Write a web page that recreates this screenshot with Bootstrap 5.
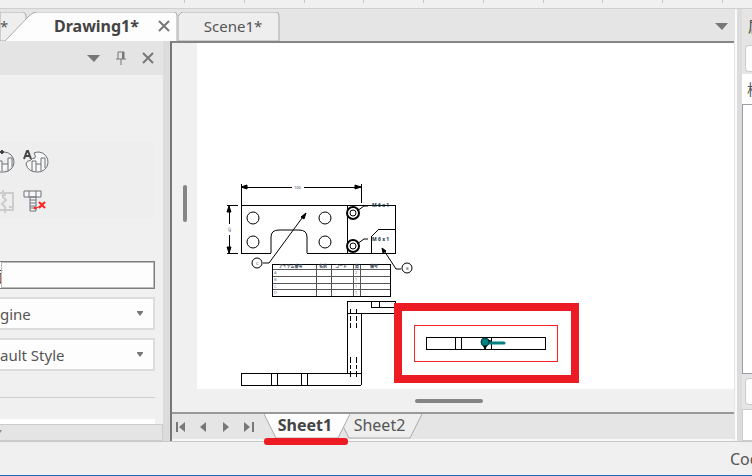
<!DOCTYPE html>
<html lang="en">
<head>
<meta charset="utf-8">
<meta name="viewport" content="width=device-width, initial-scale=1">
<title>Drawing1</title>
<link href="https://cdn.jsdelivr.net/npm/bootstrap@5.3.0/dist/css/bootstrap.min.css" rel="stylesheet">
<style>
body{font-family:"Noto Sans","Noto Sans CJK JP",sans-serif;font-size:15px;line-height:20px;color:#555;background:#f0f0f0}
button{border:0;background:none;padding:0;color:inherit}
svg{display:block;flex:none}
.ribbon-edge{height:9px;border-bottom:1px solid #cfcfcf;padding:0 29px 0 184px}
.ribbon-edge i{width:1px;height:3px;background:#c8c8c8}
.workspace{background:#e5e5e5;border-bottom:1px solid #c8c8c8;min-height:0}
.workspace main,.work-row{min-width:0;min-height:0}
.doc-tabs{height:32px;padding-top:3px}
.doc-tab{height:29px;padding-bottom:2px}
.tab-shape{position:absolute;inset:0;width:100%;height:100%}
.tab-prev{width:27px}
.tab-active{width:173px;margin-left:-22px;padding-left:49px;padding-right:8px;color:#444;font-size:16px}
.tab-scene{width:102px;padding-left:8px}
.menu-btn{margin-right:6px;padding-bottom:2px}
.tool-panel{width:163px;background:#f0f0f0}
.panel-head{height:34px;background:#e4e4e4;padding-right:9px;gap:15px}
.panel-body{padding-right:8px;padding-top:67px}
.tool-grid{background:#eee;height:76px;padding:7px 0 4px 0;margin-bottom:43px}
.tool-grid button{height:26px}
.name-box{height:28px;border:1px solid #7d7d7d;border-left:0;background:#fdfdfd;width:100%;padding:0;text-indent:-12px;color:#444;outline:1px solid #bbb;outline-offset:-2px}
.combo{height:33px;font-size:15px;line-height:20px;padding:0;color:#555;border:2px solid #dcdcdc;border-left:0;border-radius:0;background-color:#fdfdfd;background-image:url("data:image/svg+xml,%3Csvg xmlns='http://www.w3.org/2000/svg' viewBox='0 0 8 6'%3E%3Cpath d='M1 0h6v1L4 5 1 1z' fill='%23777'/%3E%3C/svg%3E");background-size:8px 6px;background-position:right 9px center}
.panel-rule{height:1px;background:#cfcfcf;margin-top:26px}
.white-strip{height:5px;background:#fff;margin-right:8px}
.panel-scroll{height:17px;background:#e4e4e4;border:1px solid #ccc;border-left:0}
.splitter{width:7px;background:#dcdcdc}
.viewer{border-left:2px solid #777;border-top:2px solid #858585;min-width:0}
.v-ruler{width:25px;background:#f0f0f0;padding-top:142px}
.v-grip{width:4px;height:37px;border-radius:2px;background:#858585}
.paper{background:#fff;min-width:0}
.h-ruler{height:25px;background:#f0f0f0;border-bottom:2px solid #999;padding-right:8px}
.h-grip{width:68px;height:4px;border-radius:2px;background:#858585}
.sheet-bar{height:27px;border-bottom:2px solid #f7f7f7;padding-left:2px}
.sheet-nav{width:23px;height:25px}
.sheet-tab{height:25px;padding-bottom:4px;font-size:16px}
.sheet-one{width:86px;margin-left:-2px;padding-right:4px;color:#444}
.sheet-two{width:80px;margin-left:-7px;padding-right:7px}
.mark-line{position:absolute;left:0;bottom:-6px;width:84px;height:7px;border-radius:3px;background:#ed1c24;z-index:3}
.view-edge{width:8px;background:linear-gradient(90deg,#e4e4e4 0 1px,#fafafa 1px 3px,#dcdcdc 3px)}
.dock{width:10px;background:#e5e5e5}
.dock-title{height:36px;padding:7px 0 0 6px;color:#444}
.dock-field{height:27px;background:#fdfdfd;border:1px solid #ccc;border-right:0;border-radius:4px 0 0 4px;margin-left:3px}
.dock-label{height:30px;background:#fff;padding:5px 0 0 5px;margin-top:2px}
.dock-list{border:1px solid #9a9ea4;border-right:0;background:#fff}
.dock-foot{height:32px;background:#fff;border:1px solid #ccc;border-right:0}
.status{height:34px;border-bottom:1px solid #1b68b3;padding-left:730px;font-size:16px}
</style>
<script src="https://cdn.jsdelivr.net/npm/bootstrap@5.3.0/dist/js/bootstrap.bundle.min.js"></script>
</head>
<body class="vh-100 d-flex flex-column overflow-hidden">
<header class="ribbon-edge d-flex justify-content-between"><i></i><i></i><i></i><i></i><i></i><i></i><i></i><i></i><i></i><i></i></header>
<div class="workspace d-flex flex-fill">
  <main class="d-flex flex-column flex-fill">
    <nav class="doc-tabs d-flex" aria-label="Documents">
      <button class="doc-tab tab-prev position-relative text-start"><svg class="tab-shape" viewBox="0 0 27 29" preserveAspectRatio="none"><path d="M0 0H23Q26 1 26 4V29H0z" fill="#eee" stroke="#aaa"/></svg><span class="position-relative">*</span></button>
      <div class="doc-tab tab-active position-relative d-flex align-items-center justify-content-between">
        <svg class="tab-shape" viewBox="0 0 173 29" preserveAspectRatio="none"><path d="M0 29L24 4Q28 0 32 0H169Q172 0 172 4V29z" fill="#fdfdfd"/><path d="M0 29L24 4Q28 0 32 0H169Q172 0 172 4V29" fill="none" stroke="#aaa"/></svg>
        <button class="position-relative fw-bold">Drawing1*</button>
        <button class="position-relative" aria-label="Close Drawing1"><svg width="12" height="12" viewBox="0 0 12 12"><path d="M1 1L11 11M11 1L1 11" stroke="#777" stroke-width="2"/></svg></button>
      </div>
      <button class="doc-tab tab-scene position-relative"><svg class="tab-shape" viewBox="0 0 102 29" preserveAspectRatio="none"><path d="M0 4L4 0H98Q101 0 101 4V29H0z" fill="#eee" stroke="#aaa"/></svg><span class="position-relative">Scene1*</span></button>
      <button class="menu-btn ms-auto" aria-label="Open documents"><svg width="13" height="8" viewBox="0 0 13 8"><path d="M0 1H13L7 8z" fill="#777"/></svg></button>
    </nav>
    <div class="work-row d-flex flex-fill">
      <aside class="tool-panel d-flex flex-column flex-shrink-0 overflow-hidden">
        <div class="panel-head d-flex align-items-center justify-content-end">
          <button aria-label="Panel menu"><svg width="13" height="8" viewBox="0 0 13 8"><path d="M0 1H13L7 8z" fill="#777"/></svg></button>
          <button aria-label="Pin"><svg width="12" height="14" viewBox="0 0 12 14" fill="none" stroke="#777"><path d="M3 8V1H9V8M1 8H11M6 8V14"/><path d="M8 1V8" stroke-width="2"/></svg></button>
          <button aria-label="Close panel"><svg width="12" height="12" viewBox="0 0 12 12"><path d="M1 1L11 11M11 1L1 11" stroke="#777" stroke-width="2"/></svg></button>
        </div>
        <div class="panel-body">
          <div class="tool-grid d-flex flex-column justify-content-between">
            <div class="d-flex gap-2">
              <button aria-label="Rotate view"><svg width="15" height="26" viewBox="0 0 15 26" fill="none" stroke="#6c7076"><path d="M0 3H4M2 1V5" stroke-width="2" stroke="#444"/><path d="M4 3A10 10 0 0 1 4 23L0 23"/><path d="M-2 22V12H2V15H8V9H12V18M8 15V22M2 15V22" fill="#f7f7f7"/></svg></button>
              <button aria-label="Label view"><svg width="26" height="26" viewBox="0 0 26 26" fill="none" stroke="#6c7076"><path d="M11 4Q13 7 12 9Q9 9 8 11Q3 12 3 15Q5 23 14 23A10 10 0 0 0 16 3Q13 3 11 4z" fill="#f7f7f7"/><path d="M9 22V12H13V15H18V9H22V19M18 15V22M13 15V22"/><path d="M1 10L4 2H5L8 10M2 7H7" stroke="#444" stroke-width="2"/></svg></button>
            </div>
            <div class="d-flex gap-2">
              <button aria-label="Break view" disabled><svg width="15" height="26" viewBox="0 0 15 26" fill="none" stroke="#ccc" stroke-width="2"><path d="M0 5H13V22H0M3 2V9L6 12L2 16L5 19V25M5 5V8M9 19H13"/></svg></button>
              <button aria-label="Remove bolt"><svg width="26" height="26" viewBox="0 0 26 26" fill="none" stroke="#6c7076"><path d="M1 3H18V9H1zM6 3V9M13 3V9M7 9H13V23H7zM7 12H13M7 15H13M7 18H13M7 20H13" fill="#f7f7f7"/><path d="M16 14L22 20M22 14L16 20" stroke="#f22" stroke-width="2"/><path d="M12 21L17 18" stroke="#f22"/><circle cx="12" cy="20" r="1" fill="#f22" stroke="#f22"/></svg></button>
            </div>
          </div>
          <input class="name-box d-block mb-2" aria-label="Name" value="面">
          <select class="form-select combo mb-2" aria-label="Standard"><option>gine</option></select>
          <select class="form-select combo" aria-label="Style"><option>ault Style</option></select>
          <div class="panel-rule"></div>
        </div>
        <div class="white-strip mt-auto"></div>
        <div class="panel-scroll"><svg width="3" height="14" viewBox="0 0 3 14"><path d="M0 5H2L0 8z" fill="#888"/></svg></div>
      </aside>
      <div class="splitter flex-shrink-0"></div>
      <section class="viewer d-flex flex-column flex-fill">
        <div class="work-row d-flex flex-fill overflow-hidden">
          <div class="v-ruler flex-shrink-0 d-flex justify-content-center"><div class="v-grip"></div></div>
          <div class="paper flex-fill">
            <svg class="w-100 h-100" viewBox="197 43 537 345" preserveAspectRatio="xMinYMin meet" fill="none" stroke="#000" role="img" aria-label="Bracket drawing" font-family="Noto Sans, Noto Sans CJK JP, sans-serif">
              <g shape-rendering="crispEdges">
                <path d="M241 184V205M361 184V203M241 187H292M304 187H361M227 205H238M227 253H238M229 206V224M229 235V253"/>
                <path d="M271 253H241V205H395V253H307M347 205V253M371 253V237M379 229H395"/>
                <path d="M316 264V296M331 264V296M353 264V296M360 264V296M272 269H390M272 276H390M272 283H390M272 289H390" stroke="#555"/>
                <path d="M272 264H390V296H272z"/>
                <path d="M395 301H347V373M347 313H395M361 313V385M371 301V307H395M379 301V307M395 301V307"/>
                <path d="M361 373H241V385H361M271 373V385M277 373V385M301 373V385M307 373V385"/>
                <path d="M350 309V313M356 309V313M350 316V321M356 316V321M350 323V328M356 323V328M350 357V363M356 357V363M350 365V369M356 365V369M350 371V377M356 371V377"/>
              </g>
              <path d="M271 253V237Q271 230 279 230H299Q307 230 307 237V253M371 237L379 229"/>
              <g><circle cx="253" cy="218" r="6"/><circle cx="325" cy="218" r="6"/><circle cx="253" cy="242" r="6"/><circle cx="325" cy="242" r="6"/></g>
              <g stroke-width="2"><circle cx="353" cy="213" r="6"/><circle cx="353" cy="246" r="6"/></g>
              <circle cx="353" cy="213" r="3"/><circle cx="353" cy="246" r="3"/>
              <path d="M357 211L364 206H368M357 244L364 239H368M263 263H269L305 214M401 269H396L383 249"/>
              <circle cx="257" cy="263" r="5"/><circle cx="407" cy="268" r="5"/>
              <path d="M241 187L247 185V189zM361 187L355 185V189zM229 206L227 212H231zM229 253L227 247H231zM306 213L301 217L304 219zM382 248L383 253L386 251z" fill="#000"/>
              <g stroke="none" fill="#345" font-size="4">
                <text x="294" y="189">100</text><text x="231" y="232" transform="rotate(-90 231 232)">40</text>
                <text x="256" y="265">C</text><text x="406" y="270">B</text>
                <g font-weight="700" fill="#134" font-size="5"><text x="372" y="207">M 6 x 1</text><text x="372" y="241">M 6 x 1</text></g>
                <g font-weight="700"><text x="279" y="268">アイテム番号</text><text x="319" y="268">名前</text><text x="335" y="268">コード</text><text x="355" y="268">数</text><text x="370" y="268">備考</text></g>
                <g fill="#57a"><text x="274" y="274">A</text><text x="274" y="281">B</text><text x="274" y="288">C</text><text x="274" y="294">D</text></g>
                <g fill="#855"><text x="355" y="274">2</text><text x="355" y="281">1</text><text x="355" y="288">1</text><text x="355" y="294">1</text></g>
              </g>
              <rect x="398" y="307" width="177" height="72" stroke="#ed1c24" stroke-width="8"/>
              <g shape-rendering="crispEdges"><rect x="414" y="325" width="143" height="36" stroke="#f22"/><path d="M426 337H545V349H426zM455 337V349M461 337V349M485 337V349M491 337V349"/></g>
              <path d="M483 345L485 349L487 345L491 341L488 340z" fill="#000"/>
              <path d="M489 343H504" stroke="#008080" stroke-width="3" stroke-linecap="round"/><circle cx="485" cy="342" r="4" fill="#008080" stroke="#033"/>
            </svg>
          </div>
        </div>
        <div class="h-ruler flex-shrink-0 d-flex align-items-center justify-content-center"><div class="h-grip"></div></div>
        <nav class="sheet-bar flex-shrink-0 d-flex" aria-label="Sheets">
          <button class="sheet-nav" aria-label="First sheet"><svg width="12" height="12" viewBox="0 0 12 12" fill="#777"><path d="M2 1H4V11H2zM11 1V11L5 6z"/></svg></button>
          <button class="sheet-nav" aria-label="Previous sheet"><svg width="12" height="12" viewBox="0 0 12 12" fill="#777"><path d="M9 1V11L3 6z"/></svg></button>
          <button class="sheet-nav" aria-label="Next sheet"><svg width="12" height="12" viewBox="0 0 12 12" fill="#777"><path d="M3 1V11L9 6z"/></svg></button>
          <button class="sheet-nav" aria-label="Last sheet"><svg width="12" height="12" viewBox="0 0 12 12" fill="#777"><path d="M1 1V11L7 6zM9 1H11V11H9z"/></svg></button>
          <button class="sheet-tab sheet-one position-relative z-1 fw-bold"><svg class="tab-shape" viewBox="0 0 86 25" preserveAspectRatio="none"><path d="M0 0L12 24H74L86 0" fill="#fdfdfd" stroke="#aaa"/></svg><span class="position-relative">Sheet1</span><span class="mark-line"></span></button>
          <button class="sheet-tab sheet-two position-relative"><svg class="tab-shape" viewBox="0 0 80 25" preserveAspectRatio="none"><path d="M5 0L0 12L6 24H67L79 0z" fill="#eee"/><path d="M0 12L6 24H67L79 0" fill="none" stroke="#aaa"/></svg><span class="position-relative">Sheet2</span></button>
        </nav>
      </section>
    </div>
  </main>
  <div class="view-edge flex-shrink-0"></div>
  <aside class="dock d-flex flex-column flex-shrink-0 overflow-hidden">
    <div class="dock-title">属</div>
    <div class="dock-field flex-shrink-0"></div>
    <div class="dock-label flex-shrink-0">検</div>
    <div class="dock-list flex-fill"></div>
    <div class="dock-field flex-shrink-0 my-1"></div>
    <div class="dock-foot flex-shrink-0"></div>
  </aside>
</div>
<footer class="status d-flex align-items-center overflow-hidden flex-shrink-0 text-nowrap">Coo</footer>
</body>
</html>
